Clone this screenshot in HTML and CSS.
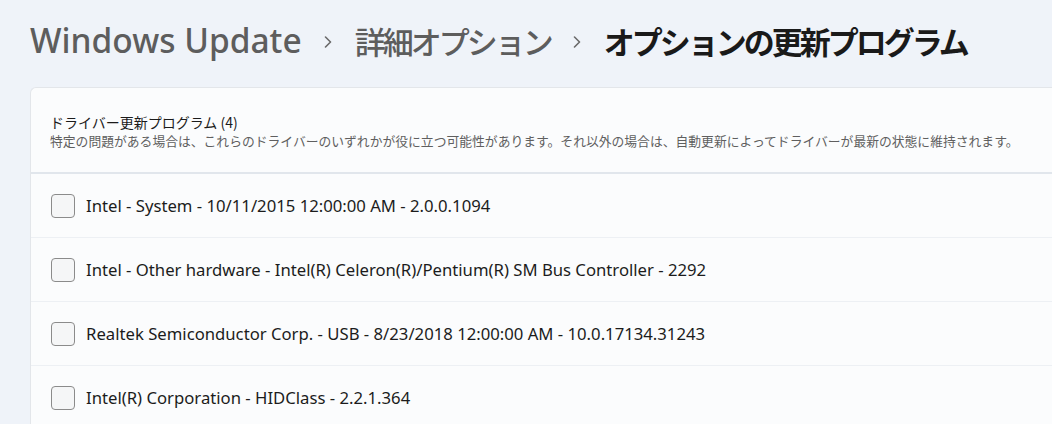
FILE: index.html
```html
<!DOCTYPE html>
<html lang="ja">
<head>
<meta charset="utf-8">
<link rel="stylesheet" href="styles.css">
</head>
<body>
<div class="page">
  <h1 class="crumbs">
    <span class="crumb latin">Windows Update</span>
    <svg class="sep" width="10" height="12" viewBox="0 0 10 12"><polyline points="2.5,1 7.5,6 2.5,11" fill="none" stroke="#6a6a6a" stroke-width="1.6" stroke-linecap="round" stroke-linejoin="round"/></svg>
    <span class="crumb">詳細オプション</span>
    <svg class="sep" width="10" height="12" viewBox="0 0 10 12"><polyline points="2.5,1 7.5,6 2.5,11" fill="none" stroke="#6a6a6a" stroke-width="1.6" stroke-linecap="round" stroke-linejoin="round"/></svg>
    <span class="crumb current">オプションの更新プログラム</span>
  </h1>
  <section class="card">
    <header class="card-head">
      <div class="card-title">ドライバー更新プログラム (4)</div>
      <div class="card-desc">特定の問題がある場合は、これらのドライバーのいずれかが役に立つ可能性があります。それ以外の場合は、自動更新によってドライバーが最新の状態に維持されます。</div>
    </header>
    <ul class="list">
      <li class="row"><span class="box"></span><span class="label">Intel - System - 10/11/2015 12:00:00 AM - 2.0.0.1094</span></li>
      <li class="row"><span class="box"></span><span class="label">Intel - Other hardware - Intel(R) Celeron(R)/Pentium(R) SM Bus Controller - 2292</span></li>
      <li class="row"><span class="box"></span><span class="label">Realtek Semiconductor Corp. - USB - 8/23/2018 12:00:00 AM - 10.0.17134.31243</span></li>
      <li class="row"><span class="box"></span><span class="label">Intel(R) Corporation - HIDClass - 2.2.1.364</span></li>
    </ul>
  </section>
</div>
</body>
</html>
```
FILE: styles.css
```css
html, body {
  margin: 0;
  padding: 0;
  background: #eff3f9;
  overflow: hidden;
}
body {
  font-family: "Noto Sans", "Noto Sans CJK JP", sans-serif;
  color: #1b1b1b;
}
.page {
  width: 1052px;
  height: 424px;
  padding-left: 30px;
  box-sizing: border-box;
}
.crumbs {
  margin: 0;
  height: 87px;
  display: flex;
  align-items: center;
  padding-bottom: 7px;
  box-sizing: border-box;
  font-weight: 500;
  font-size: 31px;
  letter-spacing: -3px;
  font-family: "Noto Sans CJK JP", sans-serif;
  white-space: nowrap;
}
.crumb {
  color: #5d5d5d;
}
.crumb.latin {
  font-family: "Noto Sans", sans-serif;
  font-size: 33.5px;
  font-weight: 500;
  letter-spacing: 0;
}
.crumb.current {
  color: #1a1a1a;
  font-weight: 700;
}
.sep {
  flex: none;
  margin: 3px 22px 0 21px;
}
.card {
  background: #fbfcfd;
  border: 1px solid #e3e6ea;
  border-right: none;
  border-bottom: none;
  border-radius: 6px 0 0 0;
  margin-right: -10px;
}
.card-head {
  height: 86px;
  box-sizing: border-box;
  padding: 24px 20px 0 19px;
  border-bottom: 2px solid #e1e6ec;
}
.card-title {
  font-family: "Noto Sans CJK JP", sans-serif;
  font-size: 14px;
  line-height: 20px;
  color: #1b1b1b;
}
.card-desc {
  font-family: "Noto Sans CJK JP", sans-serif;
  font-size: 12.8px;
  line-height: 18px;
  color: #5f5f5f;
  white-space: nowrap;
}
.list {
  list-style: none;
  margin: 0;
  padding: 0;
}
.row {
  height: 64px;
  display: flex;
  align-items: center;
  gap: 11px;
  padding-left: 20px;
  border-bottom: 1px solid #edf0f4;
  box-sizing: border-box;
}
.box {
  width: 22px;
  height: 22px;
  border: 1px solid #8b8b8b;
  border-radius: 4px;
  background: #f5f6f7;
  flex: none;
}
.label {
  font-size: 16.7px;
  color: #1c1c1c;
}
```
